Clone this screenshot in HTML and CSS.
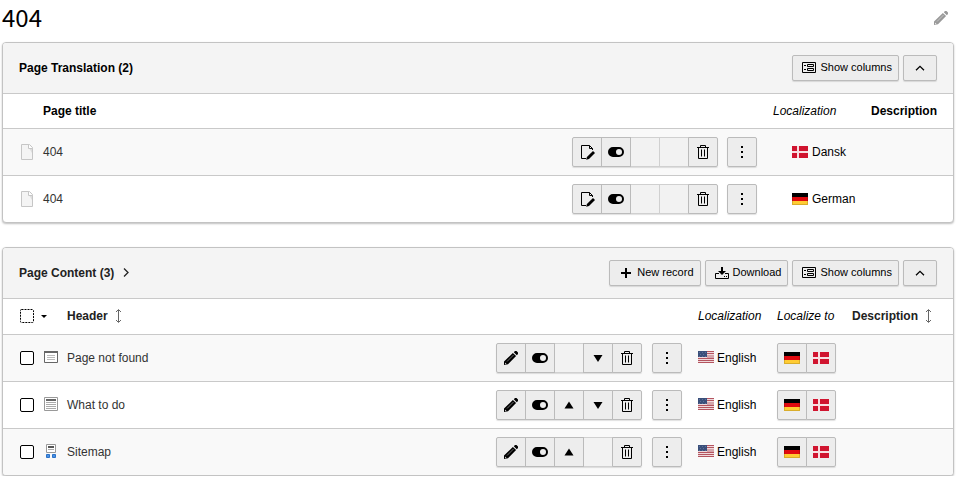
FILE: index.html
```html
<!DOCTYPE html>
<html lang="en">
<head>
<meta charset="utf-8">
<title>404</title>
<link rel="stylesheet" href="styles.css">
</head>
<body>
<svg class="sprite" aria-hidden="true">
  <symbol id="pencil" viewBox="0 0 16 16"><path fill="currentColor" d="M10.800 2.200L12 1h1.500L15 2.500V4l-1.200 1.200zM9.900 2.900l3.200 3.200L5 14.200 1 15v-3.500z"/><path fill="none" stroke="#fff" stroke-opacity=".55" stroke-width=".8" d="M4 11.500l6.500-6.500"/><path fill="#fff" fill-opacity=".85" d="M2 12.500l1.500 1.500-1.500.3z"/></symbol>
  <symbol id="pageedit" viewBox="0 0 16 16"><path fill="none" stroke="currentColor" d="M7 14.500H2.500v-13h8l3 3V6M10.500 1.500v3h3"/><path fill="currentColor" d="M14 7l2 2-6 6-2.800.800.7-2.800z"/></symbol>
  <symbol id="toggle" viewBox="0 0 16 16"><path fill="currentColor" fill-rule="evenodd" d="M5 3h6a5 5 0 0 1 0 10H5A5 5 0 0 1 5 3zm6 2a3 3 0 1 0 0 6 3 3 0 0 0 0-6z"/></symbol>
  <symbol id="trash" viewBox="0 0 16 16"><path fill="none" stroke="currentColor" d="M2 3.500h12M5.500 3V1.500h5V3M3.500 4v10.500h9V4M6.500 5.500v7M9.500 5.500v7"/></symbol>
  <symbol id="dots" viewBox="0 0 16 16"><path fill="currentColor" d="M7 2h2v2H7zM7 7h2v2H7zM7 12h2v2H7z"/></symbol>
  <symbol id="up" viewBox="0 0 16 16"><path fill="currentColor" d="M8 4.500l4.500 7h-9z"/></symbol>
  <symbol id="down" viewBox="0 0 16 16"><path fill="currentColor" d="M8 12L3.500 5h9z"/></symbol>
  <symbol id="columns" viewBox="0 0 16 16"><path fill="none" stroke="currentColor" d="M1.500 2.500h13v10h-13zM6.500 4.500h6v2h-6zM6.500 8.500h6v2h-6z"/><path fill="currentColor" d="M3 5h2v1H3zM3 9h2v1H3z"/></symbol>
  <symbol id="collapse" viewBox="0 0 16 16"><path fill="none" stroke="currentColor" stroke-width="1.300" d="M4 10.300l4-4 4 4"/></symbol>
  <symbol id="chevron" viewBox="0 0 16 16"><path fill="none" stroke="currentColor" stroke-width="1.300" d="M6 3.500l4 4-4 4"/></symbol>
  <symbol id="plus" viewBox="0 0 16 16"><path fill="currentColor" d="M7 3h2v4h4v2H9v4H7V9H3V7h4z"/></symbol>
  <symbol id="download" viewBox="0 0 16 16"><path fill="currentColor" d="M7 2h2v4h3L8 10 4 6h3zM10 11h1v1h-1zM12 11h1v1h-1z"/><path fill="none" stroke="currentColor" d="M5 8.500H1.500v5h13v-5H11"/></symbol>
  <symbol id="sort" viewBox="0 0 16 16"><path fill="none" stroke="currentColor" d="M8.500 2v12M6 4l2.500-2.500L11 4M6 12l2.500 2.500L11 12"/></symbol>
  <symbol id="page" viewBox="0 0 16 16"><path fill="#f4f4f4" stroke="#c6c6c6" d="M2.500.5h8l3 3v12h-11z"/><path fill="#ddd" d="M10 4h3v5z"/><path fill="#fff" stroke="#c6c6c6" d="M9.500.5v4h4"/></symbol>
  <symbol id="header" viewBox="0 0 16 16"><path fill="#fff" stroke="#666" d="M1.500 2.500h13v11h-13z"/><path fill="#666" d="M1 2h14v2H1z"/><path fill="#bbb" d="M4 6h8v1H4zM4 8h8v1H4zM4 10h8v1H4z"/></symbol>
  <symbol id="text" viewBox="0 0 16 16"><path fill="#fff" stroke="#999" d="M1.500 1.500h13v13h-13z"/><path fill="#666" d="M3 3h10v2H3z"/><path fill="#aaa" d="M3 6h10v1H3zM3 8h10v1H3zM3 10h10v1H3zM3 12h10v1H3z"/></symbol>
  <symbol id="sitemap" viewBox="0 0 16 16"><path fill="#fff" stroke="#999" d="M3.500 1.500h9v8h-9z"/><path fill="#555" d="M5 3h6v2H5z"/><path fill="#aaa" d="M5 6h6v1H5z"/><path fill="#4a90e2" stroke="#2b72c8" d="M3.500 11.500h3v3h-3zM9.500 11.500h3v3h-3z"/></symbol>
  <symbol id="selectall" viewBox="0 0 16 16"><rect x="1.500" y="1.500" width="13" height="13" rx="1" fill="none" stroke="currentColor" stroke-dasharray="2 1"/></symbol>
  <symbol id="caret" viewBox="0 0 16 16"><path fill="currentColor" d="M6 7h6l-3 3z"/></symbol>
  <symbol id="dk" viewBox="0 0 16 16"><path fill="#d0142f" d="M0 2h16v12H0z"/><path fill="#f8dfe2" d="M5 2h2v12H5zM0 7h16v2H0z"/></symbol>
  <symbol id="de" viewBox="0 0 16 16"><path d="M0 2h16v4H0z"/><path fill="#e00a0f" d="M0 6h16v4H0z"/><path fill="#fc3" d="M0 10h16v4H0z"/><path fill="none" stroke="#000" stroke-opacity=".15" d="M.5 2.500h15v11H.5z"/></symbol>
  <symbol id="us" viewBox="0 0 16 16"><path fill="#efd9dc" d="M0 1h16v12H0z"/><path fill="#b4545f" d="M0 1h16v1H0zM9 3h7v1H9zM0 8h16v1H0zM0 10h16v1H0zM0 12h16v1H0z"/><path fill="#d4a5ab" d="M9 5h7v3H9z"/><path fill="#3a4f7a" d="M0 1h9v6H0z"/><path fill="#5d709a" d="M1 2h1v1H1zM4 2h1v1H4zM7 2h1v1H7zM2 4h1v1H2zM5 4h1v1H5zM1 6h1v1H1zM4 6h1v1H4zM7 6h1v1H7z"/></symbol>
</svg>

<header class="page-head">
  <h1>404</h1>
  <button class="plain muted" type="button" aria-label="Edit page title"><svg class="icon"><use href="#pencil"/></svg></button>
</header>

<section class="panel">
  <div class="panel-head">
    <h2>Page Translation (2)</h2>
    <div class="tools">
      <button class="btn" type="button"><svg class="icon"><use href="#columns"/></svg>Show columns</button>
      <button class="btn btn-square" type="button" aria-label="Collapse"><svg class="icon"><use href="#collapse"/></svg></button>
    </div>
  </div>
  <table class="records translations">
    <colgroup><col class="c-icon"><col><col class="c-actions"><col class="c-lang"><col class="c-desc"></colgroup>
    <thead>
      <tr><th></th><th>Page title</th><th></th><th class="soft">Localization</th><th>Description</th></tr>
    </thead>
    <tbody>
      <tr>
        <td class="lead"><svg class="icon"><use href="#page"/></svg></td>
        <td><a href="#">404</a></td>
        <td><div class="actions">
          <div class="group"><button type="button" aria-label="Edit"><svg class="icon"><use href="#pageedit"/></svg></button><button type="button" aria-label="Disable"><svg class="icon"><use href="#toggle"/></svg></button><span class="blank"></span><span class="blank"></span><button type="button" aria-label="Delete"><svg class="icon"><use href="#trash"/></svg></button></div>
          <div class="group"><button type="button" aria-label="More"><svg class="icon"><use href="#dots"/></svg></button></div>
        </div></td>
        <td><div class="lang nested"><svg class="icon"><use href="#dk"/></svg>Dansk</div></td>
        <td></td>
      </tr>
      <tr>
        <td class="lead"><svg class="icon"><use href="#page"/></svg></td>
        <td><a href="#">404</a></td>
        <td><div class="actions">
          <div class="group"><button type="button" aria-label="Edit"><svg class="icon"><use href="#pageedit"/></svg></button><button type="button" aria-label="Disable"><svg class="icon"><use href="#toggle"/></svg></button><span class="blank"></span><span class="blank"></span><button type="button" aria-label="Delete"><svg class="icon"><use href="#trash"/></svg></button></div>
          <div class="group"><button type="button" aria-label="More"><svg class="icon"><use href="#dots"/></svg></button></div>
        </div></td>
        <td><div class="lang nested"><svg class="icon"><use href="#de"/></svg>German</div></td>
        <td></td>
      </tr>
    </tbody>
  </table>
</section>

<section class="panel">
  <div class="panel-head">
    <h2><a href="#">Page Content (3)<svg class="icon"><use href="#chevron"/></svg></a></h2>
    <div class="tools">
      <button class="btn" type="button"><svg class="icon"><use href="#plus"/></svg>New record</button>
      <button class="btn" type="button"><svg class="icon"><use href="#download"/></svg>Download</button>
      <button class="btn" type="button"><svg class="icon"><use href="#columns"/></svg>Show columns</button>
      <button class="btn btn-square" type="button" aria-label="Collapse"><svg class="icon"><use href="#collapse"/></svg></button>
    </div>
  </div>
  <table class="records content">
    <colgroup><col class="c-icon"><col class="c-type"><col><col class="c-actions"><col class="c-lang"><col class="c-localize"><col class="c-desc"></colgroup>
    <thead>
      <tr>
        <th class="lead" colspan="2"><button class="plain" type="button" aria-label="Selection options"><svg class="icon"><use href="#selectall"/></svg><svg class="icon"><use href="#caret"/></svg></button></th>
        <th><button class="plain sort" type="button">Header<svg class="icon"><use href="#sort"/></svg></button></th>
        <th></th>
        <th class="soft">Localization</th>
        <th class="soft">Localize to</th>
        <th><button class="plain sort" type="button">Description<svg class="icon"><use href="#sort"/></svg></button></th>
      </tr>
    </thead>
    <tbody>
      <tr>
        <td class="lead"><input type="checkbox" aria-label="Select Page not found"></td>
        <td class="type"><svg class="icon"><use href="#header"/></svg></td>
        <td><a href="#">Page not found</a></td>
        <td><div class="actions">
          <div class="group"><button type="button" aria-label="Edit"><svg class="icon"><use href="#pencil"/></svg></button><button type="button" aria-label="Disable"><svg class="icon"><use href="#toggle"/></svg></button><span class="blank"></span><button type="button" aria-label="Move down"><svg class="icon"><use href="#down"/></svg></button><button type="button" aria-label="Delete"><svg class="icon"><use href="#trash"/></svg></button></div>
          <div class="group"><button type="button" aria-label="More"><svg class="icon"><use href="#dots"/></svg></button></div>
        </div></td>
        <td><div class="lang"><svg class="icon"><use href="#us"/></svg>English</div></td>
        <td><div class="group"><button type="button" aria-label="German"><svg class="icon"><use href="#de"/></svg></button><button type="button" aria-label="Dansk"><svg class="icon"><use href="#dk"/></svg></button></div></td>
        <td></td>
      </tr>
      <tr>
        <td class="lead"><input type="checkbox" aria-label="Select What to do"></td>
        <td class="type"><svg class="icon"><use href="#text"/></svg></td>
        <td><a href="#">What to do</a></td>
        <td><div class="actions">
          <div class="group"><button type="button" aria-label="Edit"><svg class="icon"><use href="#pencil"/></svg></button><button type="button" aria-label="Disable"><svg class="icon"><use href="#toggle"/></svg></button><button type="button" aria-label="Move up"><svg class="icon"><use href="#up"/></svg></button><button type="button" aria-label="Move down"><svg class="icon"><use href="#down"/></svg></button><button type="button" aria-label="Delete"><svg class="icon"><use href="#trash"/></svg></button></div>
          <div class="group"><button type="button" aria-label="More"><svg class="icon"><use href="#dots"/></svg></button></div>
        </div></td>
        <td><div class="lang"><svg class="icon"><use href="#us"/></svg>English</div></td>
        <td><div class="group"><button type="button" aria-label="German"><svg class="icon"><use href="#de"/></svg></button><button type="button" aria-label="Dansk"><svg class="icon"><use href="#dk"/></svg></button></div></td>
        <td></td>
      </tr>
      <tr>
        <td class="lead"><input type="checkbox" aria-label="Select Sitemap"></td>
        <td class="type"><svg class="icon"><use href="#sitemap"/></svg></td>
        <td><a href="#">Sitemap</a></td>
        <td><div class="actions">
          <div class="group"><button type="button" aria-label="Edit"><svg class="icon"><use href="#pencil"/></svg></button><button type="button" aria-label="Disable"><svg class="icon"><use href="#toggle"/></svg></button><button type="button" aria-label="Move up"><svg class="icon"><use href="#up"/></svg></button><span class="blank"></span><button type="button" aria-label="Delete"><svg class="icon"><use href="#trash"/></svg></button></div>
          <div class="group"><button type="button" aria-label="More"><svg class="icon"><use href="#dots"/></svg></button></div>
        </div></td>
        <td><div class="lang"><svg class="icon"><use href="#us"/></svg>English</div></td>
        <td><div class="group"><button type="button" aria-label="German"><svg class="icon"><use href="#de"/></svg></button><button type="button" aria-label="Dansk"><svg class="icon"><use href="#dk"/></svg></button></div></td>
        <td></td>
      </tr>
    </tbody>
  </table>
</section>
</body>
</html>
```
FILE: styles.css
```css
* { box-sizing: border-box; }

body {
  margin: 0;
  padding: 0 3px 0 2px;
  background: #fff;
  color: #000;
  font: 12px/18px "Liberation Sans", Arial, sans-serif;
}

.sprite { display: none; }

.icon {
  display: block;
  flex: none;
  width: 16px;
  height: 16px;
}

a { color: #333; text-decoration: none; }

button { font: inherit; color: inherit; }

.plain {
  display: flex;
  align-items: center;
  padding: 0;
  border: 0;
  background: none;
}

.page-head {
  display: flex;
  align-items: center;
  justify-content: space-between;
  padding: 0 5px 6px 0;
}

h1 {
  margin: 0;
  padding-bottom: 2px;
  font: 24px/34px "Noto Sans CJK SC", "Noto Sans", sans-serif;
}

.muted { color: #999; }

.panel {
  margin-bottom: 24px;
  border: 1px solid #c3c3c3;
  border-radius: 4px;
  background: #fff;
  box-shadow: 0 1px 2px rgba(0, 0, 0, .25);
  overflow: hidden;
}

.panel:last-child { margin-bottom: 0; }

.panel-head {
  display: flex;
  align-items: center;
  justify-content: space-between;
  padding: 12px 16px;
  border-bottom: 1px solid #c9c9c9;
  background: #f4f4f4;
}

h2 {
  margin: 0;
  font-size: 12px;
  line-height: 18px;
}

h2 a {
  display: flex;
  align-items: center;
  gap: 4px;
  color: #222;
}

.tools { display: flex; gap: 4px; }

.btn,
.group > * {
  display: flex;
  align-items: center;
  justify-content: center;
  border: 1px solid #bbb;
  background: #ededed;
}

.btn {
  gap: 3px;
  height: 26px;
  padding: 0 6px 2px 8px;
  border-radius: 2px;
  box-shadow: 0 1px 1px rgba(0, 0, 0, .12);
  font-size: 11px;
}

.btn .icon { margin-top: 2px; }

.btn-square {
  width: 34px;
  padding: 0 0 2px;
}

.group {
  display: inline-flex;
  vertical-align: top;
  border-radius: 2px;
  box-shadow: 0 1px 1px rgba(0, 0, 0, .12);
}

.group > * {
  position: relative;
  width: 30px;
  height: 30px;
  padding: 0;
}

.group > * + * { margin-left: -1px; }
.group > :first-child { border-radius: 2px 0 0 2px; }
.group > :last-child { border-radius: 0 2px 2px 0; }
.group > :only-child { border-radius: 2px; }
.group > button { z-index: 1; }

.group > .blank {
  border-color: #d0d0d0;
  background: #f2f2f2;
}

.records {
  width: 100%;
  table-layout: fixed;
  border-collapse: separate;
  border-spacing: 0;
}

th, td {
  padding: 8px 0 8px 8px;
  text-align: left;
  vertical-align: middle;
  white-space: nowrap;
}

th.lead, td.lead { padding-left: 16px; }

.soft { font-weight: 400; font-style: italic; }

thead th { border-bottom: 1px solid #c9c9c9; }
tbody tr + tr td { border-top: 1px solid #c9c9c9; }
tbody tr:nth-child(odd) { background: #f9f9f9; }
tbody td { height: 46px; }
tbody tr + tr td { height: 47px; }
td.type { padding-bottom: 10px; }

.translations th { height: 35px; }
.content th { height: 36px; padding-bottom: 9px; }

.c-icon { width: 32px; }
.c-type { width: 24px; }
.c-actions { width: 202px; }
.translations .c-lang { width: 98px; }
.translations .c-desc { width: 90px; }
.content .c-lang { width: 79px; }
.content .c-localize { width: 75px; }
.content .c-desc { width: 109px; }

.actions {
  display: flex;
  justify-content: flex-end;
  gap: 10px;
  padding-right: 8px;
}

.translations .actions { gap: 9px; }

.lang {
  display: flex;
  align-items: center;
  gap: 3px;
}

.nested { gap: 4px; padding-left: 19px; }

.sort { gap: 2px; font-weight: 700; color: #222; }
.sort .icon { color: #666; }

input[type="checkbox"] {
  display: block;
  appearance: none;
  width: 14px;
  height: 14px;
  margin: 0 1px;
  border: 1px solid #000;
  border-radius: 2px;
  background: #fff;
}
```
